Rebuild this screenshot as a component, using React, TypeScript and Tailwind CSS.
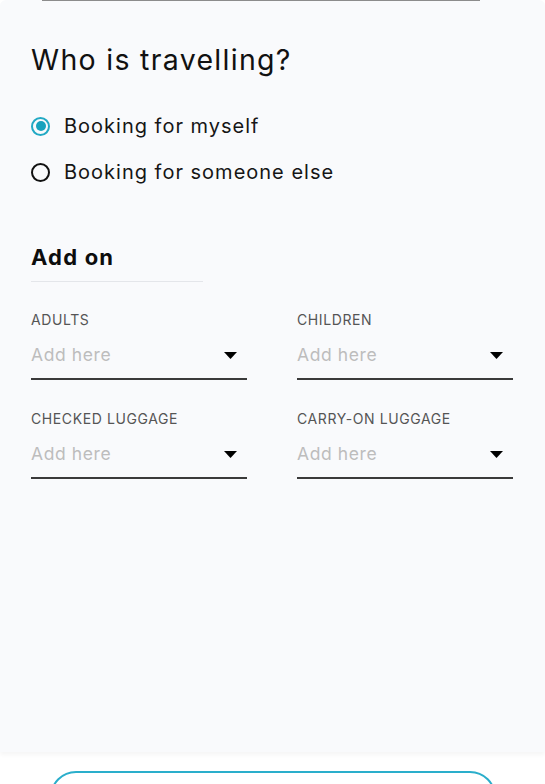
import { useState } from "react";

const Field = ({ label }: { label: string }) => (
  <div className="flex flex-col">
    <span className="text-[14px] leading-[18px] text-[#555] tracking-[0.6px]">
      {label}
    </span>
    <div className="mt-[15px] flex items-center justify-between border-b-2 border-[#3a3a3a] pb-[12px] pr-[10px]">
      <span className="text-[17.5px] leading-[22px] text-[#bdbdbd] tracking-[0.6px]">Add here</span>
      <svg width="13" height="7" viewBox="0 0 13 7">
        <path d="M0 0 L13 0 L6.5 7 Z" fill="#000" />
      </svg>
    </div>
  </div>
);

const Radio = ({
  checked,
  label,
  onClick,
}: {
  checked: boolean;
  label: string;
  onClick: () => void;
}) => (
  <button onClick={onClick} className="flex items-center gap-[14px] text-left">
    {checked ? (
      <span className="w-[19px] h-[19px] rounded-full border-2 border-[#22a9c4] flex items-center justify-center">
        <span className="w-[10px] h-[10px] rounded-full bg-[#17a2bd]" />
      </span>
    ) : (
      <span className="w-[19px] h-[19px] rounded-full border-2 border-[#111]" />
    )}
    <span className="text-[20px] leading-[24px] text-[#161616] tracking-[1px]">{label}</span>
  </button>
);

export default function App() {
  const [self, setSelf] = useState(true);

  return (
    <div
      className="w-[545px] h-[784px] bg-white overflow-hidden flex flex-col"
      style={{ fontFamily: "Inter, 'Noto Sans', sans-serif" }}
    >
      {/* Form card */}
      <div className="relative shrink-0 h-[752px] bg-[#f9fafc] rounded-t-[6px] shadow-[0_3px_4px_rgba(0,0,0,0.04)] px-[31px]">
        <div className="absolute top-0 left-[42px] right-[65px] h-[1px] bg-[#8c8c8c]" />

        <h1 className="pt-[42px] text-[28.5px] leading-[36px] text-[#111] tracking-[1.3px]">
          Who is travelling?
        </h1>

        <div className="mt-[36px] flex flex-col gap-[22px]">
          <Radio checked={self} label="Booking for myself" onClick={() => setSelf(true)} />
          <Radio checked={!self} label="Booking for someone else" onClick={() => setSelf(false)} />
        </div>

        <div className="mt-[60px] w-[172px] border-b border-[#e4e6ea] pb-[11px]">
          <h2 className="text-[22px] leading-[26px] font-bold text-[#0d0d0d] tracking-[1.2px]">Add on</h2>
        </div>

        <div className="mt-[29px] grid grid-cols-2 gap-x-[50px] gap-y-[30px] w-[482px]">
          <Field label="ADULTS" />
          <Field label="CHILDREN" />
          <Field label="CHECKED LUGGAGE" />
          <Field label="CARRY-ON LUGGAGE" />
        </div>
      </div>

      {/* Bottom action */}
      <div className="flex justify-center pt-[19px]">
        <button className="shrink-0 w-[446px] h-[52px] rounded-[26px] border-2 border-[#2aaecb] bg-white" />
      </div>
    </div>
  );
}
